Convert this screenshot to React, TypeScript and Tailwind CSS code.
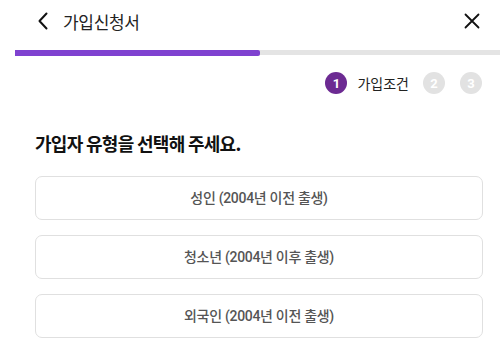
import React from "react";

const font = { fontFamily: '"Noto Sans CJK KR", "Noto Sans", sans-serif' };
const btnFont = { fontFamily: 'Roboto, "Noto Sans CJK KR", sans-serif' };

export default function App() {
  const options = [
    "성인 (2004년 이전 출생)",
    "청소년 (2004년 이후 출생)",
    "외국인 (2004년 이전 출생)",
  ];
  return (
    <div className="w-[500px] h-[343px] bg-white overflow-hidden" style={font}>
      <div className="flex items-center justify-between h-[42px] pl-[37px] pr-[20px]">
        <div className="flex items-center gap-[14px]">
          <svg width="12" height="18" viewBox="0 0 12 18" fill="none">
            <path d="M9.5 1.5L2.5 9L9.5 16.5" stroke="#111" strokeWidth="2" strokeLinecap="round" strokeLinejoin="round" />
          </svg>
          <span className="text-[17px] text-[#222] leading-none tracking-[-0.3px]">가입신청서</span>
        </div>
        <svg width="16" height="16" viewBox="0 0 16 16" fill="none">
          <path d="M1.5 1.5L14.5 14.5M14.5 1.5L1.5 14.5" stroke="#111" strokeWidth="1.8" strokeLinecap="round" />
        </svg>
      </div>
      <div className="ml-[15px] mt-[8px] h-[5px] bg-[#e4e4e4] flex">
        <div className="w-[245px] h-[6px] bg-[#7f42d0] rounded-r-[2px]" />
      </div>
      <div className="flex items-center justify-end pr-[18px] mt-[17px] h-[22px]">
        <div className="w-[22px] h-[22px] rounded-full bg-[#6c2a92] flex items-center justify-center text-white text-[13px] font-bold leading-none" style={btnFont}>1</div>
        <span className="ml-[10px] text-[14px] text-[#222] leading-none">가입조건</span>
        <div className="ml-[14px] w-[22px] h-[22px] rounded-full bg-[#e2e2e2] flex items-center justify-center text-white text-[13px] font-bold leading-none" style={btnFont}>2</div>
        <div className="ml-[15px] w-[22px] h-[22px] rounded-full bg-[#e2e2e2] flex items-center justify-center text-white text-[13px] font-bold leading-none" style={btnFont}>3</div>
      </div>
      <div className="ml-[35px] mt-[37px] text-[18px] font-bold text-[#111] tracking-[-0.7px] leading-[24px]">
        가입자 유형을 선택해 주세요.
      </div>
      <div className="flex flex-col gap-[15px] ml-[35px] mr-[17px] mt-[21px]">
        {options.map((o) => (
          <div key={o} className="h-[44px] rounded-[7px] border border-[#e0e0e0] flex items-center justify-center text-[14px] font-medium text-[#555] tracking-[-0.3px]" style={btnFont}>
            {o}
          </div>
        ))}
      </div>
    </div>
  );
}
